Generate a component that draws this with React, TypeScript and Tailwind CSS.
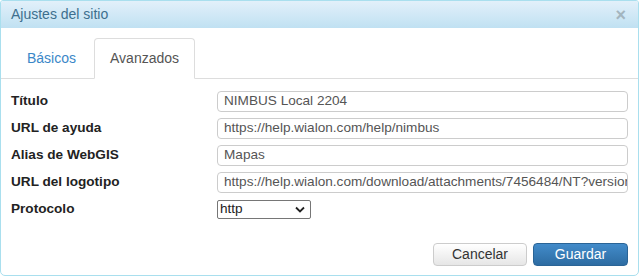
import React from "react";

const fields = [
  { label: "Título", value: "NIMBUS Local 2204" },
  { label: "URL de ayuda", value: "https://help.wialon.com/help/nimbus" },
  { label: "Alias de WebGIS", value: "Mapas" },
  {
    label: "URL del logotipo",
    value: "https://help.wialon.com/download/attachments/7456484/NT?version=1",
  },
];

export default function App() {
  return (
    <div className="w-[640px] h-[277px] bg-white font-['Liberation_Sans',Arial,sans-serif]">
      <div className="w-[639px] h-[276px] flex flex-col border border-[#a9dfee] rounded-t-[3px] rounded-b-[5px] overflow-hidden">
        <div className="h-[27px] flex items-center justify-between pl-[10px] pr-[12px] bg-gradient-to-b from-[#e2f0fa] to-[#c0e1f2]">
          <span className="text-[14px] text-[#3d6f8e]">Ajustes del sitio</span>
          <span className="text-[18px] leading-none font-bold text-[#a3b5bf]">×</span>
        </div>

        <div className="flex items-end h-[51px] pl-[11px] border-b border-[#dddddd]">
          <div className="h-[40px] px-[15px] flex items-center text-[14px] text-[#3a87c8]">
            Básicos
          </div>
          <div className="ml-[3px] h-[41px] mb-[-1px] w-[101px] flex items-center justify-center text-[14px] text-[#555555] bg-white border border-[#dddddd] border-b-white rounded-t-[4px]">
            Avanzados
          </div>
        </div>

        <div className="flex flex-col gap-[6px] pt-[12px] pl-[10px] pr-[10px]">
          {fields.map((f) => (
            <div key={f.label} className="flex items-center h-[21px]">
              <div className="w-[206px] text-[13.6px] font-bold text-[#222222]">
                {f.label}
              </div>
              <div className="flex-1 h-[21px] border border-[#cccccc] rounded-[4px] px-[6px] flex items-center overflow-hidden">
                <span className="text-[13.6px] text-[#555555] whitespace-nowrap">
                  {f.value}
                </span>
              </div>
            </div>
          ))}
          <div className="flex items-center h-[21px]">
            <div className="w-[206px] text-[13.6px] font-bold text-[#222222]">
              Protocolo
            </div>
            <div className="w-[94px] h-[19px] border border-[#767676] rounded-[2px] flex items-center justify-between pl-[2px] pr-[5px]">
              <span className="text-[13.6px] text-[#222222]">http</span>
              <svg width="10" height="7" viewBox="0 0 10 7">
                <path d="M1 1.5 L5 5.5 L9 1.5" fill="none" stroke="#222" strokeWidth="1.8" />
              </svg>
            </div>
          </div>
        </div>

        <div className="flex justify-end gap-[6px] mt-auto mb-[9px] pr-[10px]">
          <button className="w-[94px] h-[23px] rounded-[4px] border border-[#cccccc] bg-gradient-to-b from-[#ffffff] to-[#e6e6e6] text-[14px] text-[#333333]">
            Cancelar
          </button>
          <button className="w-[95px] h-[23px] rounded-[4px] border border-[#2a6496] bg-gradient-to-b from-[#428bca] to-[#2d6ca2] text-[14px] text-white">
            Guardar
          </button>
        </div>
      </div>
    </div>
  );
}
